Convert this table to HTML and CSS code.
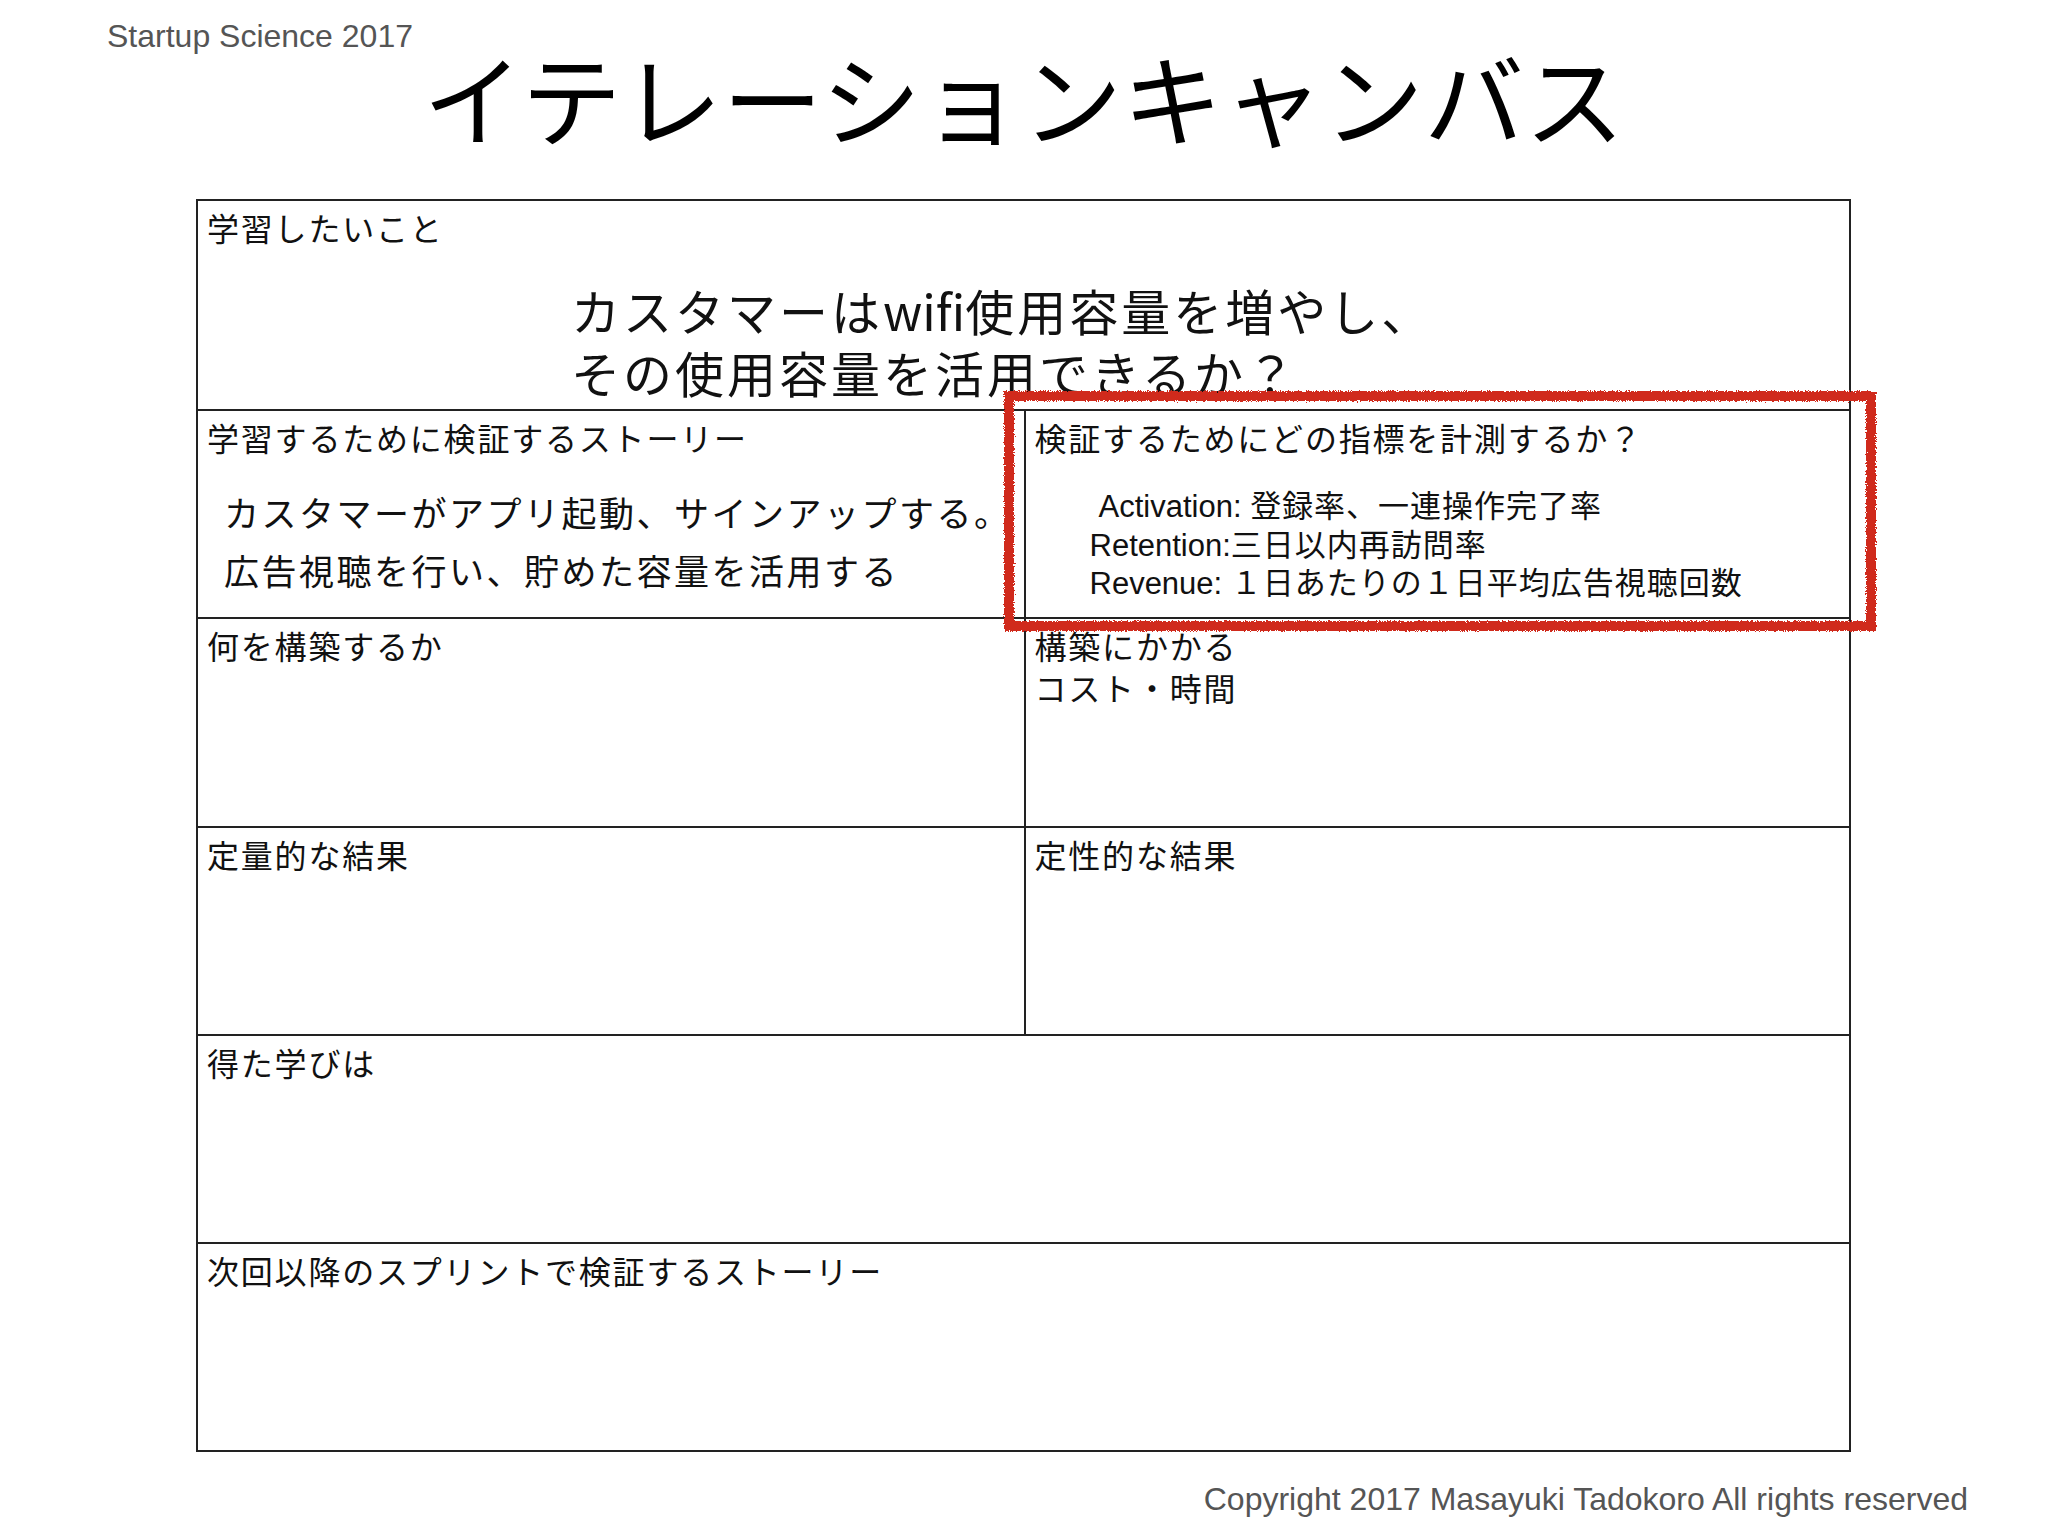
FILE: index.html
```html
<!DOCTYPE html>
<html lang="ja">
<head>
<meta charset="utf-8">
<title>イテレーションキャンバス</title>
<link rel="stylesheet" href="styles.css">
</head>
<body>
<div class="slide">
  <div class="brand">Startup Science 2017</div>
  <h1 class="title">イテレーションキャンバス</h1>
  <div class="canvas">
    <div class="row">
      <div class="cell">
        <div class="label">学習したいこと</div>
        <div class="goal">カスタマーは<span class="latin">wifi</span>使用容量を増やし、<br>その使用容量を活用できるか？</div>
      </div>
    </div>
    <div class="row split">
      <div class="cell">
        <div class="label">学習するために検証するストーリー</div>
        <div class="story">カスタマーがアプリ起動、サインアップする。<br>広告視聴を行い、貯めた容量を活用する</div>
      </div>
      <div class="cell right">
        <div class="label">検証するためにどの指標を計測するか？</div>
        <div class="metrics">
          <div class="metric first">Activation: <span class="ja">登録率、一連操作完了率</span></div>
          <div class="metric">Retention:<span class="ja">三日以内再訪問率</span></div>
          <div class="metric">Revenue: <span class="ja">１日あたりの１日平均広告視聴回数</span></div>
        </div>
      </div>
    </div>
    <div class="row split">
      <div class="cell">
        <div class="label">何を構築するか</div>
      </div>
      <div class="cell right">
        <div class="label">構築にかかる<br>コスト・時間</div>
      </div>
    </div>
    <div class="row split">
      <div class="cell">
        <div class="label">定量的な結果</div>
      </div>
      <div class="cell right">
        <div class="label">定性的な結果</div>
      </div>
    </div>
    <div class="row">
      <div class="cell">
        <div class="label">得た学びは</div>
      </div>
    </div>
    <div class="row">
      <div class="cell">
        <div class="label">次回以降のスプリントで検証するストーリー</div>
      </div>
    </div>
  </div>
  <div class="highlight">
    <svg width="874" height="242" viewBox="0 0 874 242" xmlns="http://www.w3.org/2000/svg">
      <defs>
        <filter id="rough" x="-5%" y="-5%" width="110%" height="110%">
          <feTurbulence type="fractalNoise" baseFrequency="0.9" numOctaves="2" seed="3" result="noise"/>
          <feDisplacementMap in="SourceGraphic" in2="noise" scale="5" xChannelSelector="R" yChannelSelector="G"/>
        </filter>
      </defs>
      <rect x="6" y="6" width="862" height="230" fill="none" stroke="#d0291d" stroke-width="10" filter="url(#rough)"/>
    </svg>
  </div>
  <div class="copyright">Copyright 2017 Masayuki Tadokoro All rights reserved</div>
</div>
</body>
</html>
```

FILE: styles.css
```css
html, body {
  margin: 0;
  padding: 0;
  background: #ffffff;
}

.slide {
  position: relative;
  width: 2048px;
  height: 1536px;
  background: #ffffff;
  overflow: hidden;
  color: #111;
  font-family: "Noto Sans CJK JP", sans-serif;
}

.brand {
  padding: 20px 0 0 107px;
  font-family: "Liberation Sans", Arial, sans-serif;
  font-size: 32px;
  line-height: 32px;
  color: #555;
}

.title {
  margin: 0;
  font-family: "Noto Sans CJK JP", sans-serif;
  font-weight: 400;
  font-size: 100px;
  line-height: 88px;
  letter-spacing: 0.5px;
  text-align: center;
  color: #000;
}

.canvas {
  margin: 59px 0 0 196px;
  width: 1655px;
  height: 1253px;
  box-sizing: border-box;
  border: 2px solid #222;
  display: grid;
  grid-template-rows: repeat(6, 1fr);
}

.row {
  display: grid;
  grid-template-columns: 1fr;
  border-top: 2px solid #222;
  min-height: 0;
}

.row:first-child {
  border-top: none;
}

.row.split {
  grid-template-columns: 1fr 1fr;
}

.cell {
  padding: 5px 9px;
  min-width: 0;
}

.cell.right {
  border-left: 2px solid #222;
  padding-left: 9px;
}

.label {
  font-family: "Noto Sans CJK JP", sans-serif;
  font-size: 32px;
  line-height: 42px;
  letter-spacing: 1.8px;
  white-space: nowrap;
}

.goal {
  margin-top: 31px;
  padding-left: 364px;
  font-family: "Noto Sans CJK JP", sans-serif;
  font-size: 49px;
  line-height: 62px;
  letter-spacing: 3px;
  white-space: nowrap;
}

.goal .latin {
  letter-spacing: 0;
}

.story {
  margin-top: 25px;
  padding-left: 17px;
  font-family: "Noto Sans CJK JP", sans-serif;
  font-size: 35px;
  line-height: 58px;
  letter-spacing: 2.5px;
  white-space: nowrap;
}

.metrics {
  margin-top: 27px;
  padding-left: 55px;
  font-family: "Liberation Sans", "Noto Sans CJK JP", sans-serif;
  font-size: 31px;
  line-height: 38px;
  white-space: nowrap;
}

.metric {
  height: 38.5px;
}

.metric.first {
  padding-left: 9px;
}

.metric .ja {
  font-family: "Noto Sans CJK JP", sans-serif;
  letter-spacing: 1px;
}

.highlight {
  position: absolute;
  left: 1003px;
  top: 390px;
  width: 874px;
  height: 242px;
}

.highlight svg {
  display: block;
}

.copyright {
  margin-top: 31px;
  padding-right: 80px;
  text-align: right;
  font-family: "Liberation Sans", Arial, sans-serif;
  font-size: 32px;
  line-height: 32px;
  color: #555;
}
```
